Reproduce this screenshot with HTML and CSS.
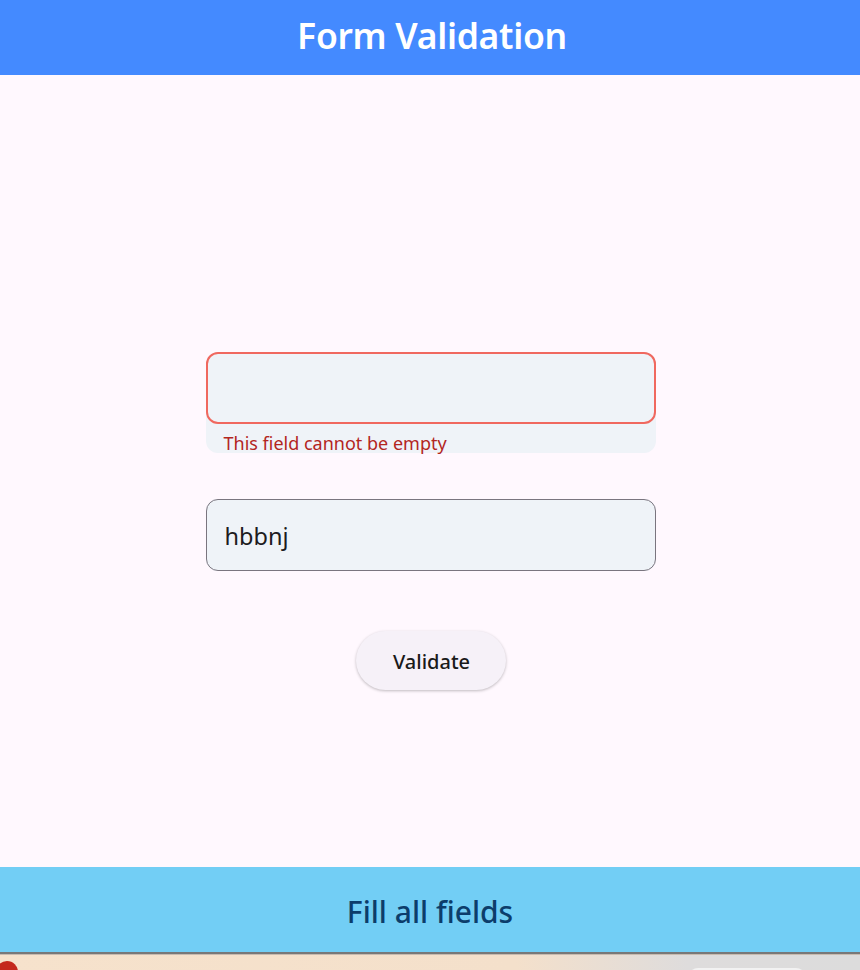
FILE: index.html
```html
<!DOCTYPE html>
<html>
<head>
<meta charset="utf-8">
<link rel="stylesheet" href="styles.css">
</head>
<body>
<div class="app">
  <header class="appbar"><h1>Form Validation</h1></header>
  <main class="content">
    <div class="form">
      <div class="field error">
        <div class="box"></div>
        <div class="helper">This field cannot be empty</div>
      </div>
      <div class="field">
        <div class="box filled">hbbnj</div>
      </div>
      <button class="validate">Validate</button>
    </div>
  </main>
  <div class="snackbar">Fill all fields</div>
  <div class="taskbar">
    <span class="dot"></span>
    <span class="pill"></span>
  </div>
</div>
</body>
</html>
```
FILE: styles.css
```css
html, body {
  margin: 0;
  padding: 0;
}
body {
  width: 860px;
  height: 970px;
  overflow: hidden;
  font-family: "Noto Sans", "Open Sans", sans-serif;
  background: #fff8fe;
}
.app {
  display: flex;
  flex-direction: column;
  height: 970px;
}
.appbar {
  height: 75px;
  background: #448aff;
  display: flex;
  align-items: center;
  justify-content: center;
  flex-shrink: 0;
}
.appbar h1 {
  margin: 0 0 5px 4px;
  color: #ffffff;
  font-size: 35.5px;
  font-weight: 600;
  letter-spacing: -0.3px;
}
.content {
  flex: 1;
  display: flex;
  justify-content: center;
  padding-top: 277px;
  box-sizing: border-box;
}
.form {
  width: 450px;
  display: flex;
  flex-direction: column;
  align-items: center;
  margin-left: 1px;
}
.field {
  width: 100%;
  background: #eff3f8;
  border-radius: 12px;
}
.field.error {
  height: 101px;
  margin-bottom: 46px;
}
.box {
  height: 72px;
  box-sizing: border-box;
  border: 1px solid #7a757f;
  border-radius: 12px;
  display: flex;
  align-items: center;
  padding-left: 18px;
  font-size: 23.5px;
  color: #1d1b20;
  padding-top: 2px;
}
.field.error .box {
  border: 2px solid #f0685f;
}
.helper {
  padding-left: 18px;
  margin-top: 7px;
  font-size: 18px;
  color: #b3261e;
  line-height: 24px;
}
.validate {
  margin-top: 60px;
  width: 150px;
  height: 59px;
  border: none;
  border-radius: 30px;
  background: #f6f1f8;
  box-shadow: 0 1px 3px rgba(0,0,0,0.25);
  font-family: inherit;
  font-size: 20px;
  font-weight: 500;
  color: #1a1a1a;
  padding: 2px 0 0 2px;
}
.snackbar {
  height: 82px;
  flex-shrink: 0;
  background: #72cef5;
  border-bottom: 2px solid #787878;
  display: flex;
  align-items: center;
  justify-content: center;
  font-size: 30px;
  font-weight: 500;
  color: #0c3d6b;
  padding-top: 3px;
  box-sizing: content-box;
}
.taskbar {
  height: 15px;
  flex-shrink: 0;
  position: relative;
  background: linear-gradient(90deg, #f6e2cc 0%, #f4e0cb 60%, #dedcdc 80%, #dcdcdc 100%);
  border-top: 1px solid #c8bbb0;
  overflow: hidden;
}
.dot {
  position: absolute;
  left: -4px;
  top: 6px;
  width: 22px;
  height: 22px;
  border-radius: 50%;
  background: #c4281c;
}
.pill {
  position: absolute;
  left: 688px;
  top: 13px;
  width: 118px;
  height: 20px;
  border-radius: 10px;
  background: #f2f2f2;
}
```
